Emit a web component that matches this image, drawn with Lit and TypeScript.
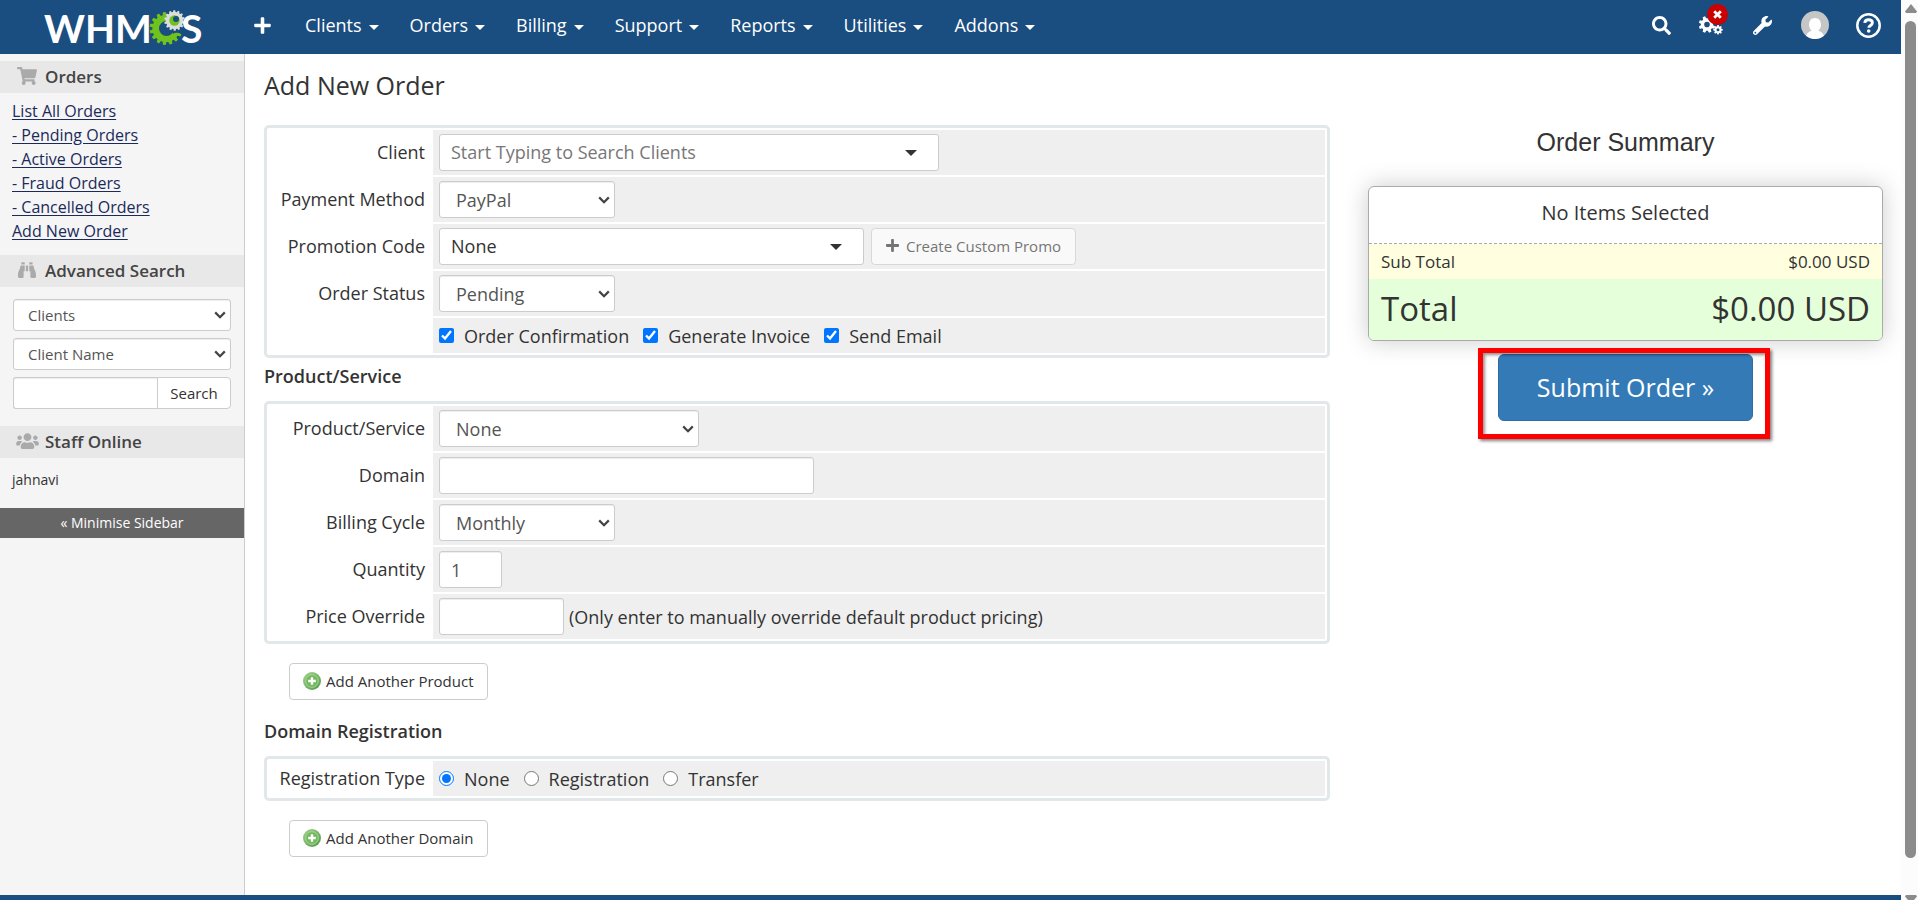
import { LitElement, html, css } from "lit";
import { customElement } from "lit/decorators.js";

const ICONS: Record<string, [number, number, string]> = {
  plus: [448, 512, "M416 208H272V64c0-17.67-14.33-32-32-32h-32c-17.67 0-32 14.33-32 32v144H32c-17.67 0-32 14.33-32 32v32c0 17.67 14.33 32 32 32h144v144c0 17.67 14.33 32 32 32h32c17.67 0 32-14.33 32-32V304h144c17.67 0 32-14.33 32-32v-32c0-17.67-14.33-32-32-32z"],
  search: [512, 512, "M505 442.7L405.3 343c-4.5-4.5-10.6-7-17-7H372c27.6-35.3 44-79.7 44-128C416 93.1 322.9 0 208 0S0 93.1 0 208s93.1 208 208 208c48.3 0 92.7-16.4 128-44v16.3c0 6.4 2.5 12.5 7 17l99.7 99.7c9.4 9.4 24.6 9.4 33.9 0l28.3-28.3c9.4-9.4 9.4-24.6.1-34zM208 336c-70.7 0-128-57.2-128-128 0-70.7 57.2-128 128-128 70.7 0 128 57.2 128 128 0 70.7-57.2 128-128 128z"],
  wrench: [512, 512, "M507.73 109.1c-2.24-9.03-13.54-12.09-20.12-5.51l-74.36 74.36-67.88-11.31-11.31-67.88 74.36-74.36c6.62-6.62 3.43-17.9-5.66-20.16-47.38-11.74-99.55.91-136.58 37.93-39.64 39.64-50.55 97.1-34.05 147.2L18.74 402.76c-24.99 24.99-24.99 65.51 0 90.5 24.99 24.99 65.51 24.99 90.5 0l213.21-213.21c50.12 16.71 107.47 5.68 147.37-34.22 37.07-37.07 49.7-89.32 37.91-136.73zM64 472c-13.25 0-24-10.75-24-24 0-13.26 10.75-24 24-24s24 10.74 24 24c0 13.25-10.75 24-24 24z"],
  cart: [576, 512, "M528.12 301.319l47.273-208C578.806 78.301 567.391 64 551.99 64H159.208l-9.166-44.81C147.758 8.021 137.93 0 126.529 0H24C10.745 0 0 10.745 0 24v16c0 13.255 10.745 24 24 24h69.883l70.248 343.435C147.325 417.1 136 435.222 136 456c0 30.928 25.072 56 56 56s56-25.072 56-56c0-15.674-6.447-29.835-16.824-40h209.647C430.447 426.165 424 440.326 424 456c0 30.928 25.072 56 56 56s56-25.072 56-56c0-22.172-12.888-41.332-31.579-50.405l5.517-24.276c3.413-15.018-8.002-29.319-23.403-29.319H218.117l-6.545-32h293.145c11.206 0 20.92-7.754 23.403-18.681z"],
  binoculars: [512, 512, "M416 48c0-8.84-7.16-16-16-16h-64c-8.84 0-16 7.16-16 16v48h96V48zM63.91 159.99C61.4 253.84 3.46 274.22 0 404v44c0 17.67 14.33 32 32 32h96c17.67 0 32-14.33 32-32V288h32V128H95.84c-17.63 0-31.45 14.37-31.93 31.99zm384.18 0c-.48-17.62-14.3-31.99-31.93-31.99H320v160h32v160c0 17.67 14.33 32 32 32h96c17.67 0 32-14.33 32-32v-44c-3.46-129.78-61.4-150.16-63.91-244.01zM176 32h-64c-8.84 0-16 7.16-16 16v48h96V48c0-8.84-7.16-16-16-16zm48 256h64V128h-64v160z"],
  users: [640, 512, "M96 224c35.3 0 64-28.7 64-64s-28.7-64-64-64-64 28.7-64 64 28.7 64 64 64zm448 0c35.3 0 64-28.7 64-64s-28.7-64-64-64-64 28.7-64 64 28.7 64 64 64zm32 32h-64c-17.6 0-33.5 7.1-45.1 18.6 40.3 22.1 68.9 62 75.1 109.4h66c17.7 0 32-14.3 32-32v-32c0-35.3-28.7-64-64-64zm-256 0c61.9 0 112-50.1 112-112S381.9 32 320 32 208 82.1 208 144s50.1 112 112 112zm76.8 32h-8.3c-20.8 10-43.9 16-68.5 16s-47.6-6-68.5-16h-8.3C179.6 288 128 339.6 128 403.2V432c0 26.5 21.5 48 48 48h288c26.5 0 48-21.5 48-48v-28.8c0-63.6-51.6-115.2-115.2-115.2zm-223.7-13.4C161.5 263.1 145.6 256 128 256H64c-35.3 0-64 28.7-64 64v32c0 17.7 14.3 32 32 32h65.9c6.3-47.4 34.9-87.3 75.2-109.4z"],
};

function icon(name: string, height: number) {
  const [w, h, d] = ICONS[name];
  return html`<svg aria-hidden="true" viewBox="0 0 ${w} ${h}" width=${Math.round((height * w) / h)} height=${height} fill="currentColor"><path d=${d}></path></svg>`;
}

/* Outline of a cog wheel with flat-topped teeth. */
function cog(cx: number, cy: number, outer: number, inner: number, teeth: number, turn = 0) {
  const pts: string[] = [];
  const step = (Math.PI * 2) / teeth;
  for (let i = 0; i < teeth; i++) {
    const a = i * step + turn;
    for (const [k, r] of [[-0.34, inner], [-0.2, outer], [0.2, outer], [0.34, inner]]) {
      pts.push(`${(cx + Math.cos(a + k * step) * r).toFixed(2)} ${(cy + Math.sin(a + k * step) * r).toFixed(2)}`);
    }
  }
  return `M${pts.join("L")}Z`;
}

function ring(cx: number, cy: number, r: number) {
  return `M${cx - r} ${cy}a${r} ${r} 0 1 0 ${2 * r} 0a${r} ${r} 0 1 0 ${-2 * r} 0Z`;
}

const reset = css`
  :host { display: block; font-family: "Open Sans", "Noto Sans", sans-serif; }
  *, *::before, *::after { box-sizing: border-box; }
  svg { display: block; flex: none; }
  button, input, select { font-family: inherit; margin: 0; }
  .btn {
    display: inline-flex; align-items: center; justify-content: center;
    border: 1px solid #ccc; border-radius: 4px; background: #fff; color: #333; white-space: nowrap;
  }
  .control {
    height: 37px; border: 1px solid #ccc; border-radius: 3px; background-color: #fff;
    color: #555; font-size: 18px; padding: 0 11px; box-shadow: inset 0 1px 1px rgba(0, 0, 0, 0.075);
  }
  select.control {
    appearance: none; padding: 0 28px 0 16px;
    background-image: url("data:image/svg+xml,%3Csvg xmlns='http://www.w3.org/2000/svg' width='12' height='8'%3E%3Cpath d='M1.2 1.4 6 6.2 10.8 1.4' fill='none' stroke='%23444' stroke-width='2.2'/%3E%3C/svg%3E");
    background-repeat: no-repeat; background-position: right 4px center;
  }
`;

@customElement("top-bar")
class TopBar extends LitElement {
  static styles = [reset, css`
    .bar { display: flex; align-items: center; height: 54px; padding: 0 20px 4px 44px; background: #1a4d80; color: #fff; }
    .logo { display: flex; align-items: center; width: 210px; height: 50px; padding-top: 6px; color: #fff; text-decoration: none; font: 700 39px/46px Lato, sans-serif; }
    .mark { margin: 0 -4px 0 -3px; }
    .plus { padding: 0; border: 0; background: none; color: #fff; }
    .menu { display: flex; flex: 1; gap: 31px; padding-left: 34px; }
    .menu a { display: flex; align-items: center; gap: 7px; height: 50px; color: #fff; font-size: 18px; text-decoration: none; }
    .menu a::after { content: ""; margin-top: 5px; border: 5px solid transparent; border-top-color: #fff; border-bottom: 0; }
    .tools { display: flex; align-items: center; height: 50px; }
    .tool { position: relative; display: flex; padding: 0; border: 0; background: none; color: #fff; }
    .search { margin-right: 28px; }
    .cogs { margin-right: 30px; }
    .wrench { margin-right: 29px; }
    .avatar { margin-right: 27px; }
    .badge { position: absolute; top: -11px; right: -5px; }
  `];

  render() {
    const menus = ["Clients", "Orders", "Billing", "Support", "Reports", "Utilities", "Addons"];
    return html`
      <header class="bar">
        <a class="logo" href="#" aria-label="WHMCS">
          <span>WHM</span>
          <svg class="mark" viewBox="0 0 36 36" width="36" height="36" aria-hidden="true">
            <path fill="#6fc31c" fill-rule="evenodd" d=${cog(17, 18.5, 16.5, 13.6, 15) + ring(17.5, 18.5, 7.5)}></path>
            <path fill="#1a4d80" d="M19 12L36 8V26L30 23Q26 22 24 24Z"></path>
            <path fill="#dcdcdc" d=${cog(25.5, 10.5, 10.3, 8.6, 14, 0.2)}></path>
            <circle cx="25.5" cy="10.5" r="5.2" fill="#6fc31c"></circle>
            <circle cx="27" cy="9" r="3" fill="#1a4d80"></circle>
          </svg>
          <span>S</span>
        </a>
        <button class="plus" aria-label="Add">${icon("plus", 19)}</button>
        <nav class="menu">${menus.map((m) => html`<a href="#">${m}</a>`)}</nav>
        <div class="tools">
          <button class="tool search" aria-label="Search">${icon("search", 19)}</button>
          <button class="tool cogs" aria-label="System status">
            <svg viewBox="0 0 24 20" width="24" height="20" fill="#fff" aria-hidden="true">
              <path fill-rule="evenodd" d=${cog(8, 9.5, 8.4, 6.2, 8, 0.39) + ring(8, 9.5, 2.8)}></path>
              <path fill-rule="evenodd" d=${cog(19, 14.8, 4.8, 3.6, 8) + ring(19, 14.8, 1.5)}></path>
              <path fill-rule="evenodd" d=${cog(19, 4.5, 4.4, 3.2, 8) + ring(19, 4.5, 1.5)}></path>
            </svg>
            <svg class="badge" viewBox="0 0 21 21" width="21" height="21" aria-hidden="true">
              <circle cx="10.5" cy="10.5" r="10.5" fill="#c00"></circle>
              <path d="M7.2 7.2 13.8 13.8M13.8 7.2 7.2 13.8" stroke="#fff" stroke-width="2.8"></path>
            </svg>
          </button>
          <button class="tool wrench" aria-label="Configuration">${icon("wrench", 19)}</button>
          <button class="tool avatar" aria-label="Account">
            <svg viewBox="0 0 28 28" width="28" height="28" aria-hidden="true">
              <circle cx="14" cy="14" r="14" fill="#c6c6c6"></circle>
              <path fill="#fff" d="M14 7c3.600 0 6 2.800 6 6.500 0 2.800-1.200 5-2.600 6.200 2.600.7 4.500 2.200 5.600 5.100A14 14 0 0 1 5 24.800c1.100-2.900 3-4.400 5.600-5.100C9.200 18.500 8 16.300 8 13.500 8 9.800 10.400 7 14 7Z"></path>
            </svg>
          </button>
          <button class="tool" aria-label="Help">
            <svg viewBox="0 0 25 25" width="25" height="25" aria-hidden="true">
              <circle cx="12.500" cy="12.500" r="11.200" fill="none" stroke="#fff" stroke-width="2.500"></circle>
              <path d="M8.700 9.900C9 7.700 10.500 6.700 12.600 6.700c2.200 0 3.800 1.200 3.800 3.100 0 2.600-3.600 2.700-3.600 5" fill="none" stroke="#fff" stroke-width="2.900"></path>
              <circle cx="12.700" cy="18" r="1.800" fill="#fff"></circle>
            </svg>
          </button>
        </div>
      </header>`;
  }
}

@customElement("side-bar")
class SideBar extends LitElement {
  static styles = [reset, css`
    :host { flex: none; width: 245px; padding-top: 7px; background: #f5f5f5; border-right: 1px solid #ccc; color: #333; }
    .title { display: flex; align-items: center; height: 32px; margin: 0; padding: 0 0 2px 15px; background: #e8e8e8; color: #444; font-size: 17px; font-weight: 600; }
    .glyph { display: flex; justify-content: center; width: 24px; margin-right: 6px; color: #aaa; }
    .links { display: flex; flex-direction: column; align-items: flex-start; margin: 0 0 12px; padding: 6px 12px 0; list-style: none; }
    .links a { color: #1b2a5b; font-size: 16px; line-height: 24px; text-underline-offset: 2px; }
    .search { display: flex; flex-direction: column; gap: 7px; margin: 0 0 17px; padding: 12px 13px 0; }
    .search .control { height: 32px; font-size: 15px; padding-left: 14px; }
    .group { display: flex; height: 32px; }
    .group .control { flex: 1; min-width: 0; border-radius: 3px 0 0 3px; border-right: 0; }
    .group .btn { width: 74px; padding-bottom: 2px; border-radius: 0 4px 4px 0; font-size: 15px; }
    .staff { margin: 0; padding: 11px 12px 18px; font-size: 14px; line-height: 21px; }
    .minimise { display: block; width: 100%; height: 30px; padding: 0 0 1px; border: 0; background: #666; color: #fff; font-size: 14px; }
  `];

  render() {
    const links = ["List All Orders", "- Pending Orders", "- Active Orders", "- Fraud Orders", "- Cancelled Orders", "Add New Order"];
    return html`
      <h2 class="title"><span class="glyph">${icon("cart", 18)}</span>Orders</h2>
      <ul class="links">${links.map((l) => html`<li><a href="#">${l}</a></li>`)}</ul>
      <h2 class="title"><span class="glyph">${icon("binoculars", 18)}</span>Advanced Search</h2>
      <form class="search" @submit=${(e: Event) => e.preventDefault()}>
        <select class="control" aria-label="Search in"><option>Clients</option></select>
        <select class="control" aria-label="Search field"><option>Client Name</option></select>
        <div class="group">
          <input class="control" type="text" aria-label="Search value" />
          <button class="btn">Search</button>
        </div>
      </form>
      <h2 class="title"><span class="glyph">${icon("users", 18)}</span>Staff Online</h2>
      <p class="staff">jahnavi</p>
      <button class="minimise">« Minimise Sidebar</button>`;
  }
}

@customElement("order-form")
class OrderForm extends LitElement {
  static styles = [reset, css`
    :host { color: #333; font-size: 18px; }
    .panel { display: grid; grid-template-columns: 162px minmax(0, 1fr); gap: 2px; padding: 2px; border: 3px solid #e2e7e9; border-radius: 5px; }
    .label { display: flex; align-items: center; justify-content: flex-end; padding: 0 6px 2px 0; white-space: nowrap; }
    .field { display: flex; align-items: center; min-height: 45px; padding: 0 6px; background: #efefef; white-space: nowrap; }
    .checks { min-height: 35px; gap: 14px; }
    .check { display: flex; align-items: center; gap: 10px; }
    .check input { width: 15px; height: 15px; accent-color: #0075ff; }
    .heading { margin: 4px 0 11px; font-size: 18px; line-height: 28px; font-weight: 600; }
    .w63 { width: 63px; }
    .w125 { width: 125px; }
    .w176 { width: 176px; }
    .w260 { width: 260px; }
    .w375 { width: 375px; }
    .w425 { width: 425px; }
    .w500 { width: 500px; }
    .combo.control {
      padding: 0 40px 2px 11px; color: #333; box-shadow: none;
      background-image: url("data:image/svg+xml,%3Csvg xmlns='http://www.w3.org/2000/svg' width='12' height='6'%3E%3Cpath d='M0 0H12L6 6Z' fill='%23333'/%3E%3C/svg%3E");
      background-repeat: no-repeat; background-position: right 21px center;
    }
    .combo::placeholder { color: #777; opacity: 1; }
    .promo { gap: 7px; height: 37px; margin-left: 7px; padding: 0 14px 2px; font-size: 15px; }
    .promo:disabled { opacity: 0.65; }
    .note { margin-left: 5px; }
    .add { gap: 5px; height: 37px; margin: 19px 0 0 25px; padding: 0 13px 1px; font-size: 15px; }
    .lower { margin: 17px 0 11px; }
  `];

  private row(id: string, label: string, control: unknown) {
    return html`<label class="label" for=${id}>${label}</label><div class="field">${control}</div>`;
  }

  private addButton(text: string) {
    return html`<button class="btn add" type="button">
      <svg viewBox="0 0 18 18" width="18" height="18" aria-hidden="true">
        <defs><linearGradient id="g" x1="0" y1="0" x2="1" y2="1"><stop offset="0" stop-color="#a5d08e"></stop><stop offset="1" stop-color="#4f9a48"></stop></linearGradient></defs>
        <circle cx="9" cy="9" r="9" fill="url(#g)"></circle>
        <circle cx="9" cy="9" r="6.300" fill="#72b95e" stroke="#a9d79a" stroke-width="1"></circle>
        <path d="M9 5.200V12.800M5.200 9H12.800" stroke="#fff" stroke-width="2.400"></path>
      </svg>${text}</button>`;
  }

  render() {
    return html`
      <div class="panel">
        ${this.row("client", "Client", html`<input id="client" class="control combo w500" placeholder="Start Typing to Search Clients" />`)}
        ${this.row("payment", "Payment Method", html`<select id="payment" class="control w176"><option>PayPal</option></select>`)}
        ${this.row("promo", "Promotion Code", html`<select id="promo" class="control combo w425"><option>None</option></select>
          <button class="btn promo" disabled>${icon("plus", 15)}Create Custom Promo</button>`)}
        ${this.row("status", "Order Status", html`<select id="status" class="control w176"><option>Pending</option></select>`)}
        <span></span>
        <div class="field checks">
          ${["Order Confirmation", "Generate Invoice", "Send Email"].map((t) => html`<label class="check"><input type="checkbox" checked />${t}</label>`)}
        </div>
      </div>
      <h2 class="heading">Product/Service</h2>
      <div class="panel">
        ${this.row("product", "Product/Service", html`<select id="product" class="control w260"><option>None</option></select>`)}
        ${this.row("domain", "Domain", html`<input id="domain" class="control w375" />`)}
        ${this.row("cycle", "Billing Cycle", html`<select id="cycle" class="control w176"><option>Monthly</option></select>`)}
        ${this.row("qty", "Quantity", html`<input id="qty" class="control w63" value="1" />`)}
        ${this.row("price", "Price Override", html`<input id="price" class="control w125" /><span class="note">(Only enter to manually override default product pricing)</span>`)}
      </div>
      ${this.addButton("Add Another Product")}
      <h2 class="heading lower">Domain Registration</h2>
      <div class="panel">
        <span class="label" id="regtype">Registration Type</span>
        <div class="field checks" role="radiogroup" aria-labelledby="regtype">
          ${["None", "Registration", "Transfer"].map((t, i) => html`<label class="check"><input type="radio" name="reg" ?checked=${i === 0} />${t}</label>`)}
        </div>
      </div>
      ${this.addButton("Add Another Domain")}`;
  }
}

@customElement("order-summary")
class OrderSummary extends LitElement {
  static styles = [reset, css`
    :host { color: #333; text-align: center; }
    .heading { margin: 0 0 29px; padding-top: 3px; font: 400 25px/29px "Liberation Sans", Arial, sans-serif; }
    .box { overflow: hidden; border: 1px solid #aaa; border-radius: 6px; background: #fff; box-shadow: 0 0 25px #ccc; }
    .items { height: 57px; border-bottom: 1px dashed #aaa; font-size: 20px; line-height: 51px; }
    .line { display: flex; justify-content: space-between; padding: 0 12px; }
    .sub { background: #ffffe0; font-size: 17px; line-height: 35px; }
    .total { padding-bottom: 2px; background: #e4ffd9; font-size: 33px; line-height: 59px; }
    .action { position: relative; display: inline-block; margin-top: 13px; }
    .submit { height: 67px; padding: 0 38px 2px; border: 1px solid #2e6da4; border-radius: 6px; background: #337ab7; color: #fff; font-size: 25px; white-space: nowrap; }
    .outline { position: absolute; inset: -6px -17px -18px -20px; border: 5px solid #f00; box-shadow: 2px 2px 3px rgba(0, 0, 0, 0.5), inset 2px 2px 3px rgba(0, 0, 0, 0.4); pointer-events: none; }
  `];

  render() {
    return html`
      <h2 class="heading">Order Summary</h2>
      <div class="box">
        <div class="items">No Items Selected</div>
        <div class="line sub"><span>Sub Total</span><span>$0.00 USD</span></div>
        <div class="line total"><span>Total</span><span>$0.00 USD</span></div>
      </div>
      <div class="action">
        <button class="submit">Submit Order »</button>
        <div class="outline"></div>
      </div>`;
  }
}

@customElement("app-root")
class AppRoot extends LitElement {
  static styles = [reset, css`
    :host { display: flex; height: 100vh; overflow: hidden; background: #fff; }
    .page { flex: 1; min-width: 0; display: flex; flex-direction: column; }
    .body { flex: 1; min-height: 0; display: flex; }
    .main { flex: 1; min-width: 0; padding: 0 18px 0 19px; }
    .title { margin: 0 0 23px; padding-top: 15px; color: #333; font-size: 25px; line-height: 33px; font-weight: 400; }
    .columns { display: grid; grid-template-columns: minmax(0, 2.07fr) minmax(0, 1fr); column-gap: 38px; align-items: start; }
    .footer { flex: none; height: 5px; background: #1a4d80; }
    .scroll { flex: none; display: flex; flex-direction: column; align-items: center; width: 17px; padding: 4px 0 0 2px; background: #fcfcfc; color: #8b8b8b; }
    .thumb { flex: 1; width: 11px; margin: 8px 0 37px; border-radius: 6px; background: #8b8b8b; }
  `];

  render() {
    return html`
      <div class="page">
        <top-bar></top-bar>
        <div class="body">
          <side-bar></side-bar>
          <main class="main">
            <h1 class="title">Add New Order</h1>
            <div class="columns">
              <order-form></order-form>
              <order-summary></order-summary>
            </div>
          </main>
        </div>
        <footer class="footer"></footer>
      </div>
      <div class="scroll" aria-hidden="true">
        <svg viewBox="0 0 12 9" width="12" height="9" fill="currentColor"><path d="M6 0 12 7.500 11 9H1L0 7.500Z"></path></svg>
        <div class="thumb"></div>
        <svg viewBox="0 0 12 5" width="12" height="5" fill="currentColor"><path d="M1 0H11L12 1.500 9 5H3L0 1.500Z"></path></svg>
      </div>`;
  }
}
